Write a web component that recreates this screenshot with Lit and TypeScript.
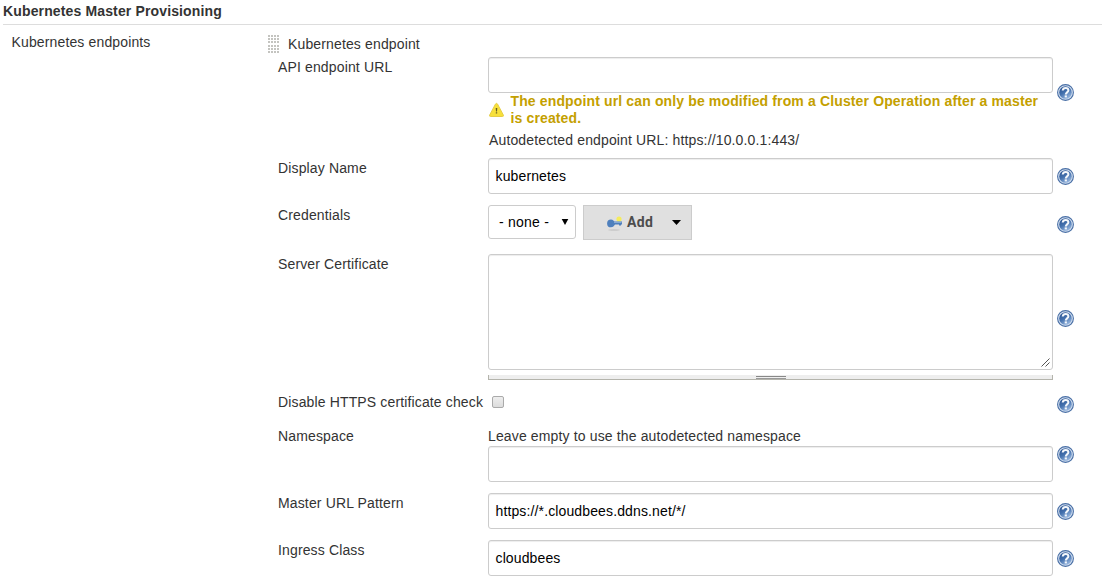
import { LitElement, html, css, svg } from "lit";
import { customElement, property } from "lit/decorators.js";

@customElement("help-icon")
class HelpIcon extends LitElement {
  static styles = css`
    :host { display: block; width: 17px; height: 17px; }
    svg { display: block; }
  `;
  render() {
    return html`<svg width="17" height="17" viewBox="0 0 17 17">
      <defs>
        <linearGradient id="g" x1="0.1" y1="0" x2="0.7" y2="1">
          <stop offset="0" stop-color="#2a5290" /><stop offset="0.5" stop-color="#4370ad" /><stop offset="1" stop-color="#9dbbe2" />
        </linearGradient>
      </defs>
      <circle cx="8.5" cy="8.5" r="7.900" fill="#d3dfef" stroke="#4a70a6" stroke-width="1.100" />
      <circle cx="8.5" cy="8.5" r="6.300" fill="url(#g)" />
      <path d="M5.700 6.500C5.900 4.700 7 3.900 8.600 3.900c1.700 0 2.800.9 2.800 2.400 0 2-2.600 2.100-2.600 4.100" fill="none" stroke="#f4f7fb" stroke-width="2" />
      <rect x="7.700" y="11.400" width="2.200" height="2" fill="#f4f7fb" />
    </svg>`;
  }
}

@customElement("form-row")
class FormRow extends LitElement {
  @property() label = "";
  @property({ type: Number }) height = 47;
  @property({ type: Number }) help = 10;
  static styles = css`
    :host { display: block; }
    .row { display: grid; grid-template-columns: 210px 565px 21px; }
    .label { line-height: 20px; white-space: nowrap; }
    .help { margin-left: 4px; }
  `;
  render() {
    return html`<div class="row" style="height:${this.height}px">
      <div class="label">${this.label}</div>
      <div><slot></slot></div>
      <help-icon class="help" style="margin-top:${this.help}px"></help-icon>
    </div>`;
  }
}

@customElement("app-root")
class AppRoot extends LitElement {
  static styles = css`
    :host { display: block; height: 585px; overflow: hidden; background: #fff; color: #333;
      font: 14px/20px "Liberation Sans", Arial, sans-serif; letter-spacing: .14px; }
    .title { margin: 0 9px 0 3px; height: 24px; line-height: 22px; font-weight: bold; border-bottom: 1px solid #ddd; }
    .body { display: grid; grid-template-columns: 255px 1fr; padding-left: 12px; }
    .section { padding-top: 7px; margin-left: -.5px; }
    .head { display: flex; align-items: center; gap: 8px; height: 20px; padding-top: 9px; margin-bottom: 3px; }
    .rows { padding-left: 11px; }
    .head svg, .warn svg, .add svg, .select svg { display: block; flex: none; }
    .input { box-sizing: border-box; height: 36px; border: 1px solid #ccc; border-radius: 3px; background: #fff;
      box-shadow: inset 0 1px 1px rgba(0,0,0,.075); padding: 0 6.5px; line-height: 34px; color: #000; letter-spacing: .13px; }
    .warn { display: flex; gap: 6px; color: #c4a000; font-weight: bold; line-height: 17px; height: 34px; letter-spacing: .135px; }
    .warn svg { margin: 9px 0 0 0; }
    .warn span { margin-left: .5px; }
    .auto { margin: 3px 0 0 1px; }
    .creds { display: flex; gap: 7px; }
    .select { box-sizing: border-box; width: 88px; height: 34px; border: 1px solid #ccc; border-radius: 3px; color: #000;
      display: flex; align-items: center; justify-content: space-between; padding: 0 6px 0 10px; letter-spacing: .22px; }
    .add { box-sizing: border-box; width: 109px; height: 35px; border: 1px solid #ccc; background: #e0e0e0; color: #4d4d4d;
      display: flex; align-items: center; padding: 0 10px 0 22px; font: bold 14px/20px Roboto, sans-serif; letter-spacing: .3px; }
    .add .txt { margin: -1px 0 0 5px; flex: 1; }
    .area { box-sizing: border-box; height: 116px; border: 1px solid #ccc; border-radius: 3px; box-shadow: inset 0 1px 1px rgba(0,0,0,.075);
      display: flex; justify-content: flex-end; align-items: flex-end; padding: 2px; }
    .grip { box-sizing: border-box; height: 5px; margin-top: 5px; background: #eee; border: 1px solid #b4b4ac; border-top: 0;
      display: flex; justify-content: center; }
    .bars { box-sizing: border-box; width: 30px; height: 3px; margin-top: 1px; border-top: 1px solid #888; border-bottom: 1px solid #999; }
    .check { box-sizing: border-box; width: 12px; height: 12px; margin: 4px 0 0 4px; border: 1px solid #aaa; border-radius: 2px; background: linear-gradient(#eee, #dcdcdc); }
  `;
  render() {
    const dots = Array.from({ length: 24 }, (_, i) =>
      svg`<rect x=${(i % 4) * 3 + 1} y=${Math.floor(i / 4) * 3 + (i > 11 ? 1 : 0)} width="2" height="2" fill="#c4c4c0" />`);
    return html`
      <div class="title">Kubernetes Master Provisioning</div>
      <div class="body">
        <div class="section">Kubernetes endpoints</div>
        <div>
          <div class="head"><svg width="13" height="18">${dots}</svg><span>Kubernetes endpoint</span></div>
          <div class="rows">
            <form-row label="API endpoint URL" height="101" help="27">
              <div class="input"></div>
              <div class="warn">
                <svg width="16" height="16" viewBox="0 0 16 16"><path d="M7.500 2Q8.500 .7 9.500 2L15.300 13Q15.800 14.500 14.500 14.500H2.500Q1.200 14.500 1.700 13Z" fill="#f7e03a" stroke="#e6cd45" /><path d="M7.700 6h1.600l-.3 3.500h-1zM7.800 10.300h1.400v1.300h-1.400z" fill="#665c20" /></svg>
                <span>The endpoint url can only be modified from a Cluster Operation after a master is created.</span>
              </div>
              <div class="auto">Autodetected endpoint URL: https://10.0.0.1:443/</div>
            </form-row>
            <form-row label="Display Name"><div class="input">kubernetes</div></form-row>
            <form-row label="Credentials" height="49" help="11">
              <div class="creds">
                <div class="select"><span>- none -</span><svg width="8" height="6"><path d="M.7 0h6.600L4 6z" fill="#000" /></svg></div>
                <div class="add">
                  <svg width="16" height="16" viewBox="0 0 16 16"><ellipse cx="8" cy="15" rx="6" ry=".8" fill="#c6c6c6" /><circle cx="13" cy="4" r="2.600" fill="#f5ec5c" /><path d="M5 4.500C7 4.500 7.500 6 8.500 6.500h7.500v3h-1v1h-2v-1H9C8 11 7 12.300 5 12.300A3.900 3.900 0 0 1 5 4.500Z" fill="#4f80bd" /><path d="M8 7h7.500v1H8z" fill="#84a9d6" /></svg>
                  <span class="txt">Add</span>
                  <svg width="9" height="5"><path d="M0 0h9L4.500 5z" fill="#000" /></svg>
                </div>
              </div>
            </form-row>
            <form-row label="Server Certificate" height="138" help="56">
              <div class="area"><svg width="9" height="9"><path d="M0.500 8.500l8-8M4.500 8.500l4-4" stroke="#555" /></svg></div>
              <div class="grip"><div class="bars"></div></div>
            </form-row>
            <form-row label="Disable HTTPS certificate check" height="34" help="4"><div class="check"></div></form-row>
            <form-row label="Namespace" height="67" help="20">
              <div>Leave empty to use the autodetected namespace</div>
              <div class="input"></div>
            </form-row>
            <form-row label="Master URL Pattern"><div class="input">https://*.cloudbees.ddns.net/*/</div></form-row>
            <form-row label="Ingress Class" height="45"><div class="input">cloudbees</div></form-row>
          </div>
        </div>
      </div>`;
  }
}
